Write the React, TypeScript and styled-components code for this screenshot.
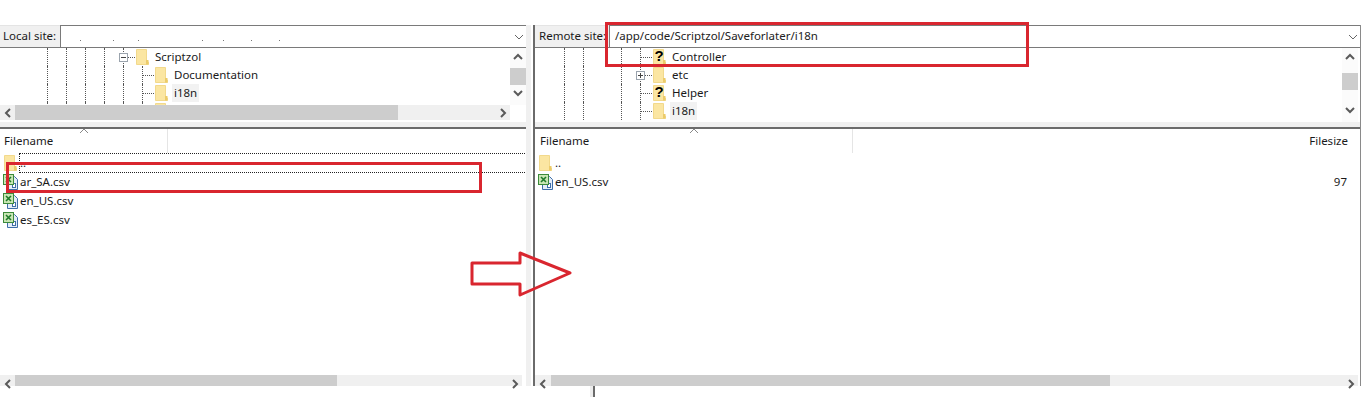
import styled, { createGlobalStyle } from "styled-components"

const GlobalStyle = createGlobalStyle`
  html, body {
    margin: 0;
    padding: 0;
    background: #fff;
    overflow: hidden;
  }
  body {
    font-family: "Noto Sans", "Liberation Sans", sans-serif;
    font-size: 11.5px;
    color: #1a1a1a;
  }
`

const Chevron = ({ dir, color = "#5a5a5a", thin }: { dir: "up" | "down" | "left" | "right"; color?: string; thin?: boolean }) => {
  const points = {
    up: "1,7 5,3 9,7",
    down: "1,3 5,7 9,3",
    left: "7,1 3,5 7,9",
    right: "3,1 7,5 3,9",
  }
  return (
    <svg width="10" height="10" viewBox="0 0 10 10">
      <polyline points={points[dir]} fill="none" stroke={color} strokeWidth={thin ? 1 : 2} />
    </svg>
  )
}

const FolderIcon = () => (
  <svg width="13" height="16" viewBox="0 0 13 16">
    <path d="M0.5 0.5H10.5V13H12.5V15.5H0.5Z" fill="#fbe6a2" stroke="#f2d98c" />
    <rect x="10" y="11" width="2.5" height="4.5" fill="#eccb6a" />
  </svg>
)

const ExcelIcon = () => (
  <svg width="15" height="16" viewBox="0 0 15 16">
    <path d="M4.5 2.5H11.5L14.5 5.5V15.5H4.5Z" fill="#e4edf8" stroke="#3f6ea8" />
    <rect x="9.5" y="9.5" width="3" height="4" fill="#fff" stroke="#3f6ea8" />
    <rect x="0.5" y="0.5" width="10" height="10" fill="#c9e6b4" stroke="#3c8a3a" />
    <path d="M3 3L8 8M8 3L3 8" stroke="#1f7a2a" strokeWidth="1.6" />
  </svg>
)

const Folder = ({ unknown }: { unknown?: boolean }) => (
  <FolderWrap>
    <FolderIcon />
    {unknown && <Question>?</Question>}
  </FolderWrap>
)

type TreeNode = {
  name?: string
  guides: boolean[]
  expander?: "plus" | "minus"
  unknown?: boolean
  selected?: boolean
}

const TreeRows = ({ nodes, $indent }: { nodes: TreeNode[]; $indent: number }) => (
  <Rows $indent={$indent}>
    {nodes.map((n, row) => (
      <TreeRow key={row}>
        {n.guides.map((on, i) => (
          <Guide key={i} $on={on} />
        ))}
        <Branch>
          {n.expander && <Expander>{n.expander === "plus" ? <PlusMark /> : <MinusMark />}</Expander>}
        </Branch>
        <Folder unknown={n.unknown} />
        {n.name && <TreeLabel $selected={n.selected}>{n.name}</TreeLabel>}
      </TreeRow>
    ))}
  </Rows>
)

const VerticalBar = ({ $offset }: { $offset: number }) => (
  <VScroll>
    <Chevron dir="up" />
    <VThumb $offset={$offset} />
    <VEnd>
      <Chevron dir="down" />
    </VEnd>
  </VScroll>
)

const HorizontalBar = ({ $width, $height = 15, $button, $thumb }: { $width: number; $height?: number; $button: number; $thumb: number }) => (
  <HScroll $width={$width} $height={$height}>
    <HButton $width={$button} $low={$height < 15}>
      <Chevron dir="left" />
    </HButton>
    <HThumb $width={$thumb} />
    <HEnd $low={$height < 15}>
      <Chevron dir="right" />
    </HEnd>
  </HScroll>
)

const SiteBar = ({ label, $labelWidth, $labelPad, children }: { label: string; $labelWidth: number; $labelPad: number; children?: React.ReactNode }) => (
  <Address>
    <SiteLabel $width={$labelWidth} $pad={$labelPad}>{label}</SiteLabel>
    <SiteInput>
      <SiteText>{children}</SiteText>
      <Chevron dir="down" color="#666" thin />
    </SiteInput>
  </Address>
)

const FileList = ({ headerWidth, $pad, children, size }: { headerWidth: number; $pad: number; children: React.ReactNode; size?: boolean }) => (
  <List>
    <ListHeader>
      <NameColumn $width={headerWidth} $pad={$pad}>
        Filename
        <SortCaret>
          <Chevron dir="up" color="#888" thin />
        </SortCaret>
      </NameColumn>
      {size && <SizeColumn>Filesize</SizeColumn>}
    </ListHeader>
    {children}
  </List>
)

const localTree: TreeNode[] = [
  { name: "Scriptzol", guides: [true, true, true, true], expander: "minus" },
  { name: "Documentation", guides: [true, true, true, true, true] },
  { name: "i18n", guides: [true, true, true, true, true], selected: true },
  { guides: [true, true, true, true, true] },
]

const remoteTree: TreeNode[] = [
  { name: "Controller", guides: [true, true, false, true], unknown: true },
  { name: "etc", guides: [true, true, false, true], expander: "plus" },
  { name: "Helper", guides: [true, true, false, true], unknown: true },
  { name: "i18n", guides: [true, true, false, true], selected: true },
]

const redactedDots = [15, 33, 25, 64, 21, 28, 28]

export default function App() {
  return (
    <Page>
      <GlobalStyle />
      <Panes>
        <Pane $width={526}>
          <SiteBar label="Local site:" $labelWidth={60} $labelPad={3}>
            <Dots>
              {redactedDots.map((gap, i) => (
                <Dot key={i} $gap={gap} />
              ))}
            </Dots>
          </SiteBar>
          <TreeBlock>
            <TreeTop>
              <TreeClip>
                <TreeRows nodes={localTree} $indent={47} />
              </TreeClip>
              <VerticalBar $offset={6} />
            </TreeTop>
            <HorizontalBar $width={510} $button={15} $thumb={383} />
          </TreeBlock>
          <FileList headerWidth={168} $pad={4}>
            <FileRow>
              <IconSlot><FolderIcon /></IconSlot>
              <FileName $focus>..</FileName>
            </FileRow>
            <FileRow>
              <IconSlot><ExcelIcon /></IconSlot>
              <FileName>ar_SA.csv</FileName>
            </FileRow>
            <FileRow>
              <IconSlot><ExcelIcon /></IconSlot>
              <FileName>en_US.csv</FileName>
            </FileRow>
            <FileRow>
              <IconSlot><ExcelIcon /></IconSlot>
              <FileName>es_ES.csv</FileName>
            </FileRow>
          </FileList>
          <HorizontalBar $width={522} $height={11} $button={15} $thumb={322} />
        </Pane>
        <PaneGap />
        <RemotePane>
          <SiteBar label="Remote site:" $labelWidth={74} $labelPad={4}>/app/code/Scriptzol/Saveforlater/i18n</SiteBar>
          <RemoteTree>
            <TreeClip>
              <TreeRows nodes={remoteTree} $indent={29} />
            </TreeClip>
            <VerticalBar $offset={11} />
          </RemoteTree>
          <FileList headerWidth={318} $pad={5} size>
            <FileRow>
              <IconSlot><FolderIcon /></IconSlot>
              <FileName>..</FileName>
            </FileRow>
            <FileRow>
              <IconSlot><ExcelIcon /></IconSlot>
              <FileName>en_US.csv</FileName>
              <FileSize>97</FileSize>
            </FileRow>
          </FileList>
          <HorizontalBar $width={823} $height={11} $button={16} $thumb={559} />
        </RemotePane>
      </Panes>
      <ResizeStub />

      <RemoteHighlight />
      <FileHighlight />
      <ArrowMark width="104" height="48" viewBox="0 0 104 48">
        <path d="M2 12H50V2L100 22L50 44V33H2Z" fill="none" stroke="#d9262f" strokeWidth="3" strokeLinejoin="round" />
      </ArrowMark>
    </Page>
  )
}

const Page = styled.div`
  position: relative;
  width: 1366px;
  height: 402px;
  padding-top: 25px;
  box-sizing: border-box;
  background: #fff;
  overflow: hidden;
`

const Panes = styled.div`
  display: flex;
  width: 1361px;
  height: 361px;
`

const Pane = styled.div<{ $width: number }>`
  width: ${(p) => p.$width}px;
  display: flex;
  flex-direction: column;
`

const PaneGap = styled.div`
  width: 7px;
  background: linear-gradient(to right, #f0f0f0 5px, #fff 5px);
`

const RemotePane = styled.div`
  flex: 1;
  min-width: 0;
  display: flex;
  flex-direction: column;
  border-left: 2px solid #6b6b6b;
  border-right: 1px solid #8a8a8a;
`

const Address = styled.div`
  height: 23px;
  flex: none;
  box-sizing: border-box;
  display: flex;
  border-bottom: 1px solid #7a7a7a;
`

const SiteLabel = styled.div<{ $width: number; $pad: number }>`
  width: ${(p) => p.$width}px;
  box-sizing: border-box;
  flex: none;
  display: flex;
  align-items: center;
  padding: 0 0 2px ${(p) => p.$pad}px;
  background: #f0f0f0;
  white-space: nowrap;
  line-height: 1;
  border-top: 1px solid #e4e4e4;
`

const SiteInput = styled.div`
  flex: 1;
  min-width: 0;
  display: flex;
  align-items: center;
  justify-content: space-between;
  padding: 0 2px 0 5px;
  border-top: 1px solid #7a7a7a;
  border-left: 1px solid #7a7a7a;
  background: #fff;
`

const SiteText = styled.div`
  white-space: nowrap;
  color: #222;
  margin-top: -2px;
`

const Dots = styled.div`
  display: flex;
  padding-top: 10px;
`

const Dot = styled.span<{ $gap: number }>`
  width: 1px;
  height: 1px;
  background: #777;
  margin-left: ${(p) => p.$gap - 1}px;
`

const TreeBlock = styled.div`
  height: 74px;
  flex: none;
  display: flex;
  flex-direction: column;
`

const RemoteTree = styled.div`
  height: 74px;
  flex: none;
  display: flex;
  padding-right: 2px;
`

const TreeTop = styled.div`
  height: 57px;
  flex: none;
  display: flex;
`

const TreeClip = styled.div`
  flex: 1;
  min-width: 0;
  overflow: hidden;
`

const Rows = styled.div<{ $indent: number }>`
  padding-left: ${(p) => p.$indent}px;
`

const TreeRow = styled.div`
  height: 18px;
  display: flex;
  align-items: stretch;
`

const Guide = styled.div<{ $on: boolean }>`
  width: 19px;
  box-sizing: border-box;
  border-left: 1px dotted ${(p) => (p.$on ? "#555" : "transparent")};
`

const Branch = styled.div`
  position: relative;
  width: 13px;
  box-sizing: border-box;
  border-left: 1px dotted #555;
  &::after {
    content: "";
    position: absolute;
    left: 0;
    right: 1px;
    top: 9px;
    border-top: 1px dotted #555;
  }
`

const Expander = styled.div`
  position: absolute;
  z-index: 1;
  left: -5px;
  top: 5px;
  width: 9px;
  height: 9px;
  box-sizing: border-box;
  background: #fff;
  border: 1px solid #9aa3ad;
  display: flex;
  align-items: center;
  justify-content: center;
`

const MinusMark = styled.span`
  width: 5px;
  height: 1px;
  background: #444;
`

const PlusMark = styled(MinusMark)`
  position: relative;
  &::after {
    content: "";
    position: absolute;
    left: 2px;
    top: -2px;
    width: 1px;
    height: 5px;
    background: #444;
  }
`

const FolderWrap = styled.div`
  position: relative;
  width: 13px;
  height: 16px;
  margin-top: 1px;
  flex: none;
`

const Question = styled.span`
  position: absolute;
  left: 0;
  top: -1px;
  width: 12px;
  text-align: center;
  font: 700 15px/16px "Liberation Sans", sans-serif;
  color: #000;
`

const TreeLabel = styled.span<{ $selected?: boolean }>`
  margin-left: 4px;
  padding: 0 2px;
  line-height: 17px;
  background: ${(p) => (p.$selected ? "#f2f2f2" : "transparent")};
`

const VScroll = styled.div`
  width: 16px;
  flex: none;
  display: flex;
  flex-direction: column;
  align-items: center;
  padding-top: 4px;
  box-sizing: border-box;
  background: #fbfbfb;
`

const VThumb = styled.div<{ $offset: number }>`
  width: 16px;
  height: 17px;
  margin-top: ${(p) => p.$offset}px;
  background: #cdcdcd;
`

const VEnd = styled.div`
  margin-top: auto;
  padding-bottom: 4px;
`

const HScroll = styled.div<{ $width: number; $height: number }>`
  width: ${(p) => p.$width}px;
  height: ${(p) => p.$height}px;
  flex: none;
  display: flex;
  background: #f0f0f0;
`

const HButton = styled.div<{ $width: number; $low?: boolean }>`
  width: ${(p) => p.$width}px;
  height: 15px;
  margin-top: ${(p) => (p.$low ? "1px" : "0")};
  display: flex;
  align-items: center;
  justify-content: center;
`

const HThumb = styled.div<{ $width: number }>`
  width: ${(p) => p.$width}px;
  background: #cdcdcd;
`

const HEnd = styled.div<{ $low?: boolean }>`
  margin-left: auto;
  width: 15px;
  height: 15px;
  margin-top: ${(p) => (p.$low ? "1px" : "0")};
  display: flex;
  align-items: center;
  justify-content: center;
`

const List = styled.div`
  flex: 1;
  min-height: 0;
  margin-top: 5px;
  border-top: 2px solid #6b6b6b;
  background: #fff;
  box-shadow: 0 -5px 0 #f0f0f0;
`

const ListHeader = styled.div`
  height: 24px;
  display: flex;
  align-items: flex-start;
  box-sizing: border-box;
  line-height: 23px;
`

const NameColumn = styled.div<{ $width: number; $pad: number }>`
  position: relative;
  width: ${(p) => p.$width}px;
  height: 100%;
  box-sizing: border-box;
  padding-left: ${(p) => p.$pad}px;
  border-right: 1px solid #e5e5e5;
`

const SortCaret = styled.span`
  position: absolute;
  left: calc(50% - 5px);
  top: -3px;
  line-height: 0;
`

const SizeColumn = styled.div`
  flex: 1;
  text-align: right;
  padding-right: 12px;
`

const FileRow = styled.div`
  height: 19px;
  display: flex;
  align-items: center;
  padding: 0 13px 0 3px;
`

const IconSlot = styled.div`
  width: 15px;
  display: flex;
  justify-content: center;
  flex: none;
`

const FileName = styled.div<{ $focus?: boolean }>`
  flex: 1;
  margin-left: 2px;
  margin-right: ${(p) => (p.$focus ? "-13px" : "0")};
  line-height: 18px;
  outline: ${(p) => (p.$focus ? "1px dotted #222" : "none")};
`

const FileSize = styled.div`
  text-align: right;
`

const ResizeStub = styled.div`
  width: 3px;
  height: 11px;
  margin-left: 590px;
  background: #ececec;
  border-right: 2px solid #6b6b6b;
`

const RemoteHighlight = styled.div`
  position: absolute;
  left: 605px;
  top: 22px;
  width: 424px;
  height: 45px;
  box-sizing: border-box;
  border: 3px solid #d9262f;
`

const FileHighlight = styled.div`
  position: absolute;
  left: 6px;
  top: 162px;
  width: 476px;
  height: 31px;
  box-sizing: border-box;
  border: 3px solid #d9262f;
`

const ArrowMark = styled.svg`
  position: absolute;
  left: 470px;
  top: 251px;
`
